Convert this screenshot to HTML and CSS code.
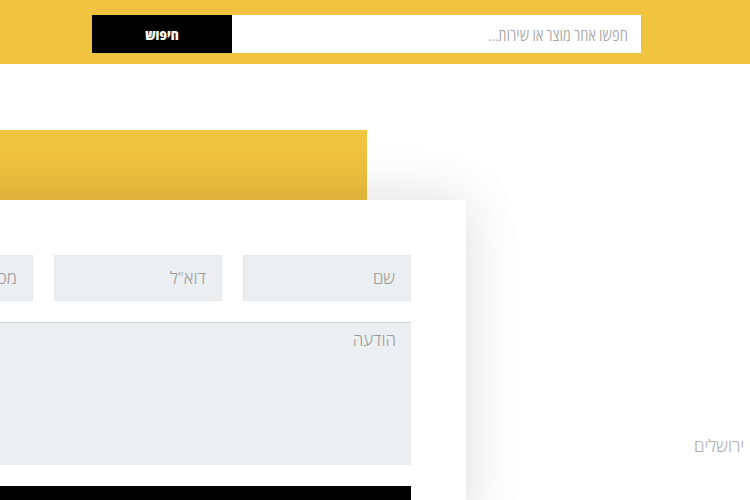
FILE: index.html
```html
<!DOCTYPE html>
<html lang="he">
<head>
<meta charset="utf-8">
<link rel="stylesheet" href="styles.css">
</head>
<body>
<header class="topbar">
  <form class="search">
    <div class="search-input" dir="rtl">חפשו אחר מוצר או שירות...</div>
    <div class="search-btn">חיפוש</div>
  </form>
</header>
<main class="main">
  <section class="left">
    <div class="yellow-block"></div>
    <div class="card">
      <div class="row" dir="rtl">
        <div class="field">שם</div>
        <div class="field">דוא"ל</div>
        <div class="field">מספר טלפון</div>
      </div>
      <div class="textarea" dir="rtl">הודעה</div>
      <div class="submit"></div>
    </div>
  </section>
  <aside class="right">
    <p class="address" dir="rtl">רחוב הרצל 1 ירושלים</p>
  </aside>
</main>
</body>
</html>
```
FILE: styles.css
```css
html, body {
  margin: 0;
  padding: 0;
  background: #fff;
  overflow: hidden;
  width: 750px;
  height: 500px;
}
body {
  font-family: "Open Sans", "DejaVu Sans", sans-serif;
}
.topbar {
  height: 64px;
  background: #f0c43f;
  padding-top: 15px;
  box-sizing: border-box;
}
.search {
  display: flex;
  flex-direction: row-reverse;
  margin: 0 0 0 92px;
  width: 549px;
  height: 38px;
}
.search-input {
  flex: 1;
  background: #fff;
  color: #a3a3a3;
  font-family: "Open Sans", sans-serif;
  font-stretch: 75%;
  font-size: 18px;
  font-weight: 300;
  line-height: 38px;
  padding-right: 13px;
  text-align: right;
}
.search-btn {
  width: 140px;
  background: #000;
  color: #fff;
  font-family: "Open Sans", sans-serif;
  font-weight: 800;
  font-size: 15px;
  font-stretch: 75%;
  text-align: center;
  line-height: 38px;
}
.main {
  display: flex;
  align-items: flex-start;
}
.left {
  width: 466px;
  flex: none;
  padding-top: 66px;
}
.yellow-block {
  width: 367px;
  height: 70px;
  background: linear-gradient(#f0c540, #edc03e);
}
.card {
  margin-left: -190px;
  width: 656px;
  height: 330px;
  box-sizing: border-box;
  background: #fff;
  padding: 55px 55px 0 55px;
  box-shadow: 0 0 55px rgba(0, 0, 0, 0.14);
  display: flex;
  flex-direction: column;
  gap: 21px;
}
.row {
  display: flex;
  gap: 21px;
}
.field {
  width: 168px;
  height: 46px;
  box-sizing: border-box;
  background: #eceff2;
  border: 1px solid #e6e9ec;
  color: #9a9a9a;
  font-family: "Open Sans", sans-serif;
  font-weight: 300;
  font-size: 17px;
  line-height: 44px;
  padding-right: 15px;
  white-space: nowrap;
  overflow: hidden;
}
.textarea {
  height: 143px;
  box-sizing: border-box;
  background: #eceff2;
  border-top: 1px solid #cdd2d7;
  color: #9a9a9a;
  font-family: "Open Sans", sans-serif;
  font-weight: 300;
  font-size: 17px;
  line-height: 24px;
  padding: 5px 15px 0 0;
}
.submit {
  height: 40px;
  background: #000;
}
.right {
  margin-left: 228px;
  padding-top: 372px;
  flex: none;
  width: 400px;
}
.address {
  margin: 0;
  text-align: left;
  white-space: nowrap;
  color: #adadad;
  font-family: "Open Sans", sans-serif;
  font-weight: 300;
  font-size: 17px;
  line-height: 20px;
}
```
